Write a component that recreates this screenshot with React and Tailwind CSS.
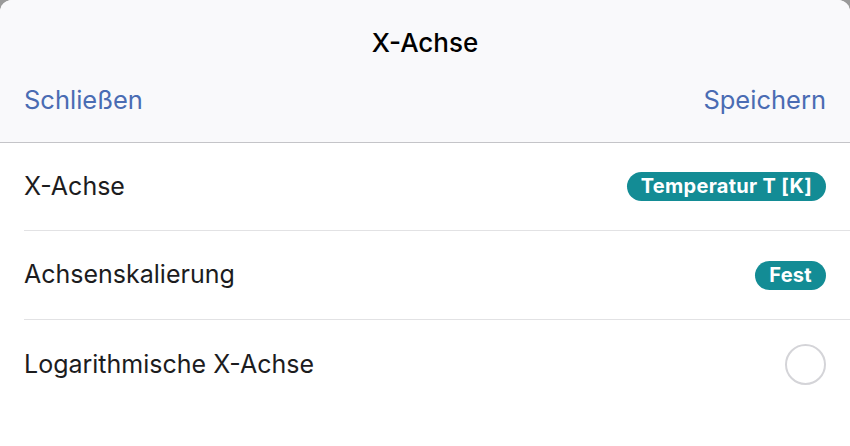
export default function App() {
  return (
    <div className="h-[446px] w-[850px] overflow-hidden bg-[#9a9a9a]" style={{ fontFamily: '"Inter", "Liberation Sans", sans-serif' }}>
      <div className="h-full w-full overflow-hidden rounded-t-[12px] bg-white">
        {/* Header */}
        <div className="flex h-[143px] flex-col border-b border-[#c4c4c8] bg-[#f9f9fb] px-6">
          <div className="pt-[26px] text-center text-[26px] font-medium leading-[34px] text-black">X-Achse</div>
          <div className="mt-[24px] flex items-center justify-between text-[25.5px] leading-[32px] text-[#4a6cb3]">
            <button type="button">Schließen</button>
            <button type="button">Speichern</button>
          </div>
        </div>

        {/* Rows */}
        <div className="pl-6">
          <div className="flex h-[88px] items-center justify-between border-b border-[#e2e2e4] pr-6">
            <span className="text-[25px] text-[#1c1c1e]">X-Achse</span>
            <span className="rounded-full bg-[#138c95] px-[14px] py-[1px] text-[20px] font-bold leading-[27px] tracking-[0.3px] text-white">
              Temperatur T [K]
            </span>
          </div>
          <div className="flex h-[89px] items-center justify-between border-b border-[#e2e2e4] pr-6">
            <span className="text-[25px] text-[#1c1c1e]">Achsenskalierung</span>
            <span className="rounded-full bg-[#138c95] px-[14px] py-[1px] text-[20px] font-bold leading-[27px] tracking-[0.3px] text-white">
              Fest
            </span>
          </div>
          <div className="flex h-[89px] items-center justify-between pr-6">
            <span className="text-[25px] text-[#1c1c1e]">Logarithmische X-Achse</span>
            <span className="h-[41px] w-[41px] rounded-full border-[2px] border-[#d4d4d8]" />
          </div>
        </div>
      </div>
    </div>
  );
}
